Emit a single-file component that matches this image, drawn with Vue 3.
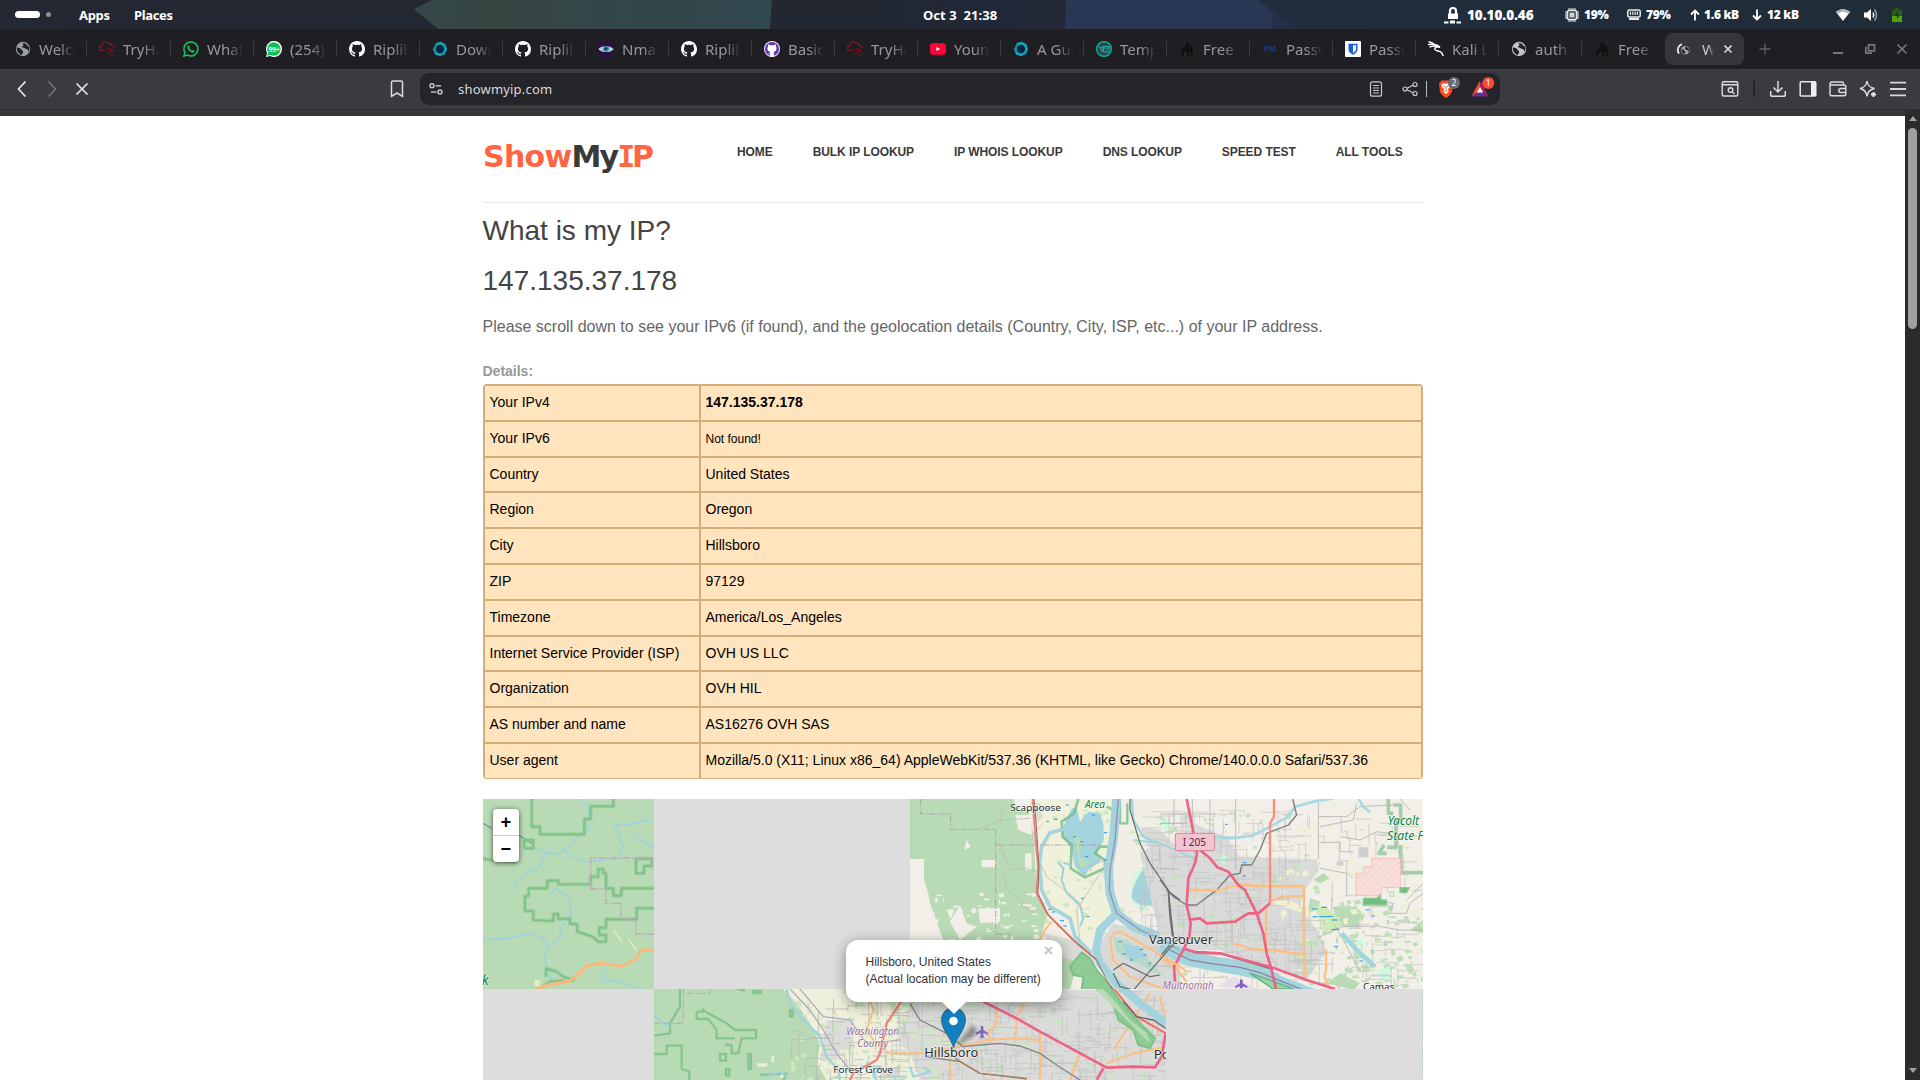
<script setup>
const tabs = [
  { icon: 'globe', title: 'Welco' },
  { icon: 'thm', title: 'TryHa' },
  { icon: 'wa', title: 'What' },
  { icon: 'wa99', title: '(254)' },
  { icon: 'gh', title: 'Riplili' },
  { icon: 'hex', title: 'Down' },
  { icon: 'gh', title: 'Riplili' },
  { icon: 'eye', title: 'Nmap' },
  { icon: 'gh', title: 'Riplili' },
  { icon: 'ghp', title: 'Basic' },
  { icon: 'thm', title: 'TryHa' },
  { icon: 'yt', title: 'Youn' },
  { icon: 'hex', title: 'A Gui' },
  { icon: 'temp', title: 'Temp' },
  { icon: 'fire', title: 'Free T' },
  { icon: 'pm', title: 'Passw' },
  { icon: 'bw', title: 'Passw' },
  { icon: 'kali', title: 'Kali L' },
  { icon: 'globe2', title: 'auth.' },
  { icon: 'fire', title: 'Free T' }
]
const nav = ['HOME', 'BULK IP LOOKUP', 'IP WHOIS LOOKUP', 'DNS LOOKUP', 'SPEED TEST', 'ALL TOOLS']
const rows = [
  ['Your IPv4', '147.135.37.178', 'strong'],
  ['Your IPv6', 'Not found!', 'small'],
  ['Country', 'United States'],
  ['Region', 'Oregon'],
  ['City', 'Hillsboro'],
  ['ZIP', '97129'],
  ['Timezone', 'America/Los_Angeles'],
  ['Internet Service Provider (ISP)', 'OVH US LLC'],
  ['Organization', 'OVH HIL'],
  ['AS number and name', 'AS16276 OVH SAS'],
  ['User agent', 'Mozilla/5.0 (X11; Linux x86_64) AppleWebKit/537.36 (KHTML, like Gecko) Chrome/140.0.0.0 Safari/537.36']
]

let seed = 7
const rnd = () => (seed = (seed * 16807) % 2147483647) / 2147483647
// Axis-aligned minor streets inside a box
function streets(x, y, w, h, n, max) {
  let d = ''
  for (let i = 0; i < n; i++) {
    const px = Math.round(x + rnd() * w)
    const py = Math.round(y + rnd() * h)
    const l = Math.round(12 + rnd() * max)
    d += rnd() > 0.5 ? `M${px},${py}h${l}` : `M${px},${py}v${l}`
    if (rnd() > 0.7) d += `l${Math.round(rnd() * 20)},${Math.round(rnd() * 24 - 8)}`
  }
  return d
}
// Small irregular blobs (parks, woods, fields)
function blobs(x, y, w, h, n, max) {
  let d = ''
  for (let i = 0; i < n; i++) {
    const a = 3 + rnd() * max
    const b = 3 + rnd() * max * 0.8
    d += `M${Math.round(x + rnd() * w)},${Math.round(y + rnd() * h)}l${a.toFixed(1)},${(-b / 3).toFixed(1)}l${(a / 3).toFixed(1)},${b.toFixed(1)}l${(-a).toFixed(1)},${(b / 3).toFixed(1)}z`
  }
  return d
}
const city = streets(-60, 60, 480, 510, 340, 70)
const eastRoads = streets(420, 60, 340, 520, 95, 60)
const cityGreen = blobs(0, 60, 480, 500, 120, 13)
const eastGreen = blobs(400, 330, 390, 260, 150, 17)
const eastCream = blobs(350, 60, 430, 500, 80, 18)
const westPale = blobs(70, 310, 330, 140, 55, 14)
const farm = blobs(420, 60, 300, 380, 60, 14)
const southStreets = streets(-60, 600, 850, 270, 340, 60)
const southGreen = blobs(-200, 600, 980, 270, 170, 14)
const southCream = blobs(-330, 600, 500, 270, 120, 18)
const westRoads = streets(-330, 620, 330, 250, 65, 60)
const wetMarks = 'M440,55h10M462,88h10M438,94h9M575,75h10M612,128h10M540,155h9M520,140h8M555,200h10M610,210h10M498,45h8M445,358h10M455,366h10M480,392h12M490,408h10M543,325h8M560,380h8M735,238h10M655,455h10M668,492h10M720,478h10M690,510h9M730,495h8M745,520h8'
</script>

<template>
  <div class="screen">
    <svg class="defs" width="0" height="0">
      <symbol id="globe" viewBox="0 0 16 16">
        <circle cx="8" cy="8" r="7.2" fill="#9aa0a6" />
        <path d="M2.2 6.3C3.5 7.3 5 7.1 5.9 7.8c1 .8.7 1.9 1.7 2.2.9.4.8 1.6 0 2.3-.6.6-.4 1.3-1 1.9C4 13 1.8 10.500 1.700 7.500ZM7.200 1.900c.3 1 1.300 1.200 1.300 2.100 0 1-1.500 1.100-1.600 2 .6.800 2 .4 2.800 1.200.8.8 2.500.5 3 1.400.4.7.3 1.700 1 2.200a6.300 6.300 0 0 0 .4-5L12.200 4.400 10.600 2.500Z" fill="#202024" />
      </symbol>
      <symbol id="globe2" viewBox="0 0 16 16">
        <circle cx="8" cy="8" r="7.200" fill="#c4c4c6" />
        <path d="M2.2 6.3C3.5 7.3 5 7.1 5.9 7.8c1 .8.7 1.9 1.7 2.2.9.4.8 1.6 0 2.3-.6.6-.4 1.3-1 1.9C4 13 1.8 10.500 1.700 7.500ZM7.200 1.900c.3 1 1.300 1.200 1.300 2.100 0 1-1.500 1.100-1.600 2 .6.800 2 .4 2.800 1.200.8.8 2.500.5 3 1.400.4.7.3 1.700 1 2.200a6.300 6.300 0 0 0 .4-5L12.200 4.400 10.600 2.500Z" fill="#202024" />
      </symbol>
      <symbol id="thm" viewBox="0 0 16 16">
        <path d="M6.500 9.300H2.700A2.300 2.300 0 0 1 2.700 4.700 3.600 3.600 0 0 1 9.200 2.300 3 3 0 0 1 12.800 4.800 2 2 0 0 1 15 7" fill="none" stroke="#a30f22" stroke-width="1.100" />
        <path d="M9 7.500h1.500M12 7.500h1M8.500 9.500h1M11 9.500h3.500M8 12h2.500M12 11.500h1M11 14h1.200M13.500 14h2" stroke="#8d1322" stroke-width="1.200" />
      </symbol>
      <symbol id="wa" viewBox="0 0 16 16">
        <path d="M.900 15.100 1.900 11.500A7 7 0 1 1 4.600 14.100Z" fill="none" stroke="#19c65b" stroke-width="1.500" />
        <path d="M5.700 4.200 6.800 6.200 6.200 7.100C6.700 8.300 7.700 9.200 8.900 9.700L9.700 8.900 11.700 9.900C11.500 11.400 10.300 11.900 9 11.500 6.800 10.900 5 9.100 4.500 7 4.200 5.700 4.700 4.500 5.700 4.200Z" fill="#19c65b" />
      </symbol>
      <symbol id="wa99" viewBox="0 0 16 16">
        <path d="M0 16 1.100 12A8 8 0 1 1 4.200 15Z" fill="#fff" />
        <path d="M1.300 14.700 2.200 11.600A6.700 6.700 0 1 1 4.600 13.900Z" fill="#0abf53" />
        <text x="8.200" y="10.700" font-size="7.500" font-weight="700" fill="#fff" text-anchor="middle" textLength="11.500" lengthAdjust="spacingAndGlyphs" font-family="Noto Sans">99+</text>
      </symbol>
      <symbol id="gh" viewBox="0 0 16 16">
        <path fill="#fff" d="M8 0C3.580 0 0 3.580 0 8c0 3.540 2.290 6.530 5.470 7.590.4.070.550-.170.550-.380 0-.190-.010-.820-.010-1.490-2.010.370-2.530-.490-2.690-.940-.090-.230-.480-.940-.820-1.130-.280-.150-.680-.520-.010-.530.630-.010 1.080.580 1.230.820.720 1.210 1.870.870 2.330.660.070-.520.280-.870.510-1.070-1.780-.200-3.640-.890-3.640-3.950 0-.870.310-1.590.820-2.150-.080-.200-.360-1.020.080-2.120 0 0 .670-.210 2.200.820.640-.180 1.320-.270 2-.270s1.360.090 2 .270c1.530-1.040 2.200-.820 2.200-.820.440 1.100.160 1.920.080 2.120.510.560.820 1.270.820 2.150 0 3.070-1.870 3.750-3.650 3.950.290.250.540.730.540 1.480 0 1.070-.010 1.930-.010 2.200 0 .210.150.460.550.380A8.010 8.010 0 0 0 16 8c0-4.420-3.580-8-8-8Z" />
      </symbol>
      <symbol id="ghp" viewBox="0 0 16 16">
        <circle cx="8" cy="8" r="8" fill="#f1ecfa" /><circle cx="8" cy="8" r="7" fill="#6437b4" />
        <path fill="#fff" d="M4.200 3.200 6.400 4.200h3.200l2.200-1c.5 1 .4 1.600.2 2.300 1.300 2.700 0 4.900-2.300 5.300l.3 4.900H6l.2-2.500-2.300-.8 2-.2.3-1.400C3.800 10.400 2.700 8 4 5.500c-.2-.8-.2-1.500.2-2.300Z" />
      </symbol>
      <symbol id="hex" viewBox="0 0 16 16">
        <path d="M4 1.800 9 .700 13.500 3 15.200 8 13 13.200 8 15.200 3 13.600.900 8.500Z" fill="#0e96ad" />
        <path d="M4.500 3.200 9.500 1.900 13.900 8 8.500 14 3 12.400" fill="none" stroke="#26bfd0" stroke-width=".7" />
        <circle cx="8" cy="8" r="4.200" fill="#062742" />
      </symbol>
      <symbol id="eye" viewBox="0 0 16 16">
        <rect width="16" height="16" rx="1" fill="#2a1140" />
        <path d="M.3 8.200C4 3.800 11.500 3.800 15.700 8.200 12 12 4.500 12 .3 8.200Z" fill="#a8d5e2" />
        <circle cx="8" cy="7.800" r="3" fill="#3e7d99" /><circle cx="8" cy="7.600" r="1.200" fill="#102a3f" />
      </symbol>
      <symbol id="yt" viewBox="0 0 16 16">
        <rect y="2.300" width="16" height="11.500" rx="2.800" fill="#ff0438" /><path d="M6.400 5.900 10.200 8 6.400 10.100Z" fill="#fff" />
      </symbol>
      <symbol id="temp" viewBox="0 0 16 16">
        <circle cx="8" cy="8" r="7.400" fill="#2d4656" stroke="#07bc96" stroke-width="1.200" />
        <path d="M2.500 6.200H7M4 8H7M4.500 10H7M7.500 5.500h5.500v5.500H7.500ZM7.500 6l2.700 2.500L13 6" fill="none" stroke="#07bc96" stroke-width="1" />
      </symbol>
      <symbol id="fire" viewBox="0 0 16 16">
        <path d="M8 .3c1.200 2 3 4 2.800 6 .9-.4 1.200-1.200 1.400-2.300 1.600 3 2 5.500 1.500 9L12.500 16h-9C1.500 12.500 2 9 3.500 6.500c.2 1 .5 1.600 1.200 2C5 5.500 7.700 3.500 8 .3Z" fill="#121112" />
        <path d="M5 16c.3-2 .8-3.800 1.500-5 .5 1.500.7 3 .6 5M10 11c1 1.800 1.300 3.200 1 5" stroke="#38302c" fill="none" />
      </symbol>
      <symbol id="pm" viewBox="0 0 16 16">
        <text x="2" y="11" font-size="8.500" font-weight="700" fill="#173c7c" textLength="12" lengthAdjust="spacingAndGlyphs" font-family="Liberation Sans">PM</text>
      </symbol>
      <symbol id="bw" viewBox="0 0 16 16">
        <rect width="16" height="16" rx="1" fill="#fff" /><path d="M3.500 2.700h9v5.500c0 2.500-2 4.300-4.500 5.500-2.500-1.200-4.500-3-4.500-5.500Z" fill="#175ddc" /><path d="M8 4.300h3v4c0 1.500-1.500 2.800-3 3.700Z" fill="#fff" />
      </symbol>
      <symbol id="kali" viewBox="0 0 16 16">
        <path d="M.5.800C3 1 5 2 6.500 3.500M0 3.500C3 3 6 3 8.500 4.200M1.500 6C4 5 7 4.700 9 5.500M8 4c2 .2 2.800 1.200 4 2.200C9.500 5.600 6.500 6 6.700 8c.3 2 3.600 1.600 5.500 2.700 1.600.9 2.500 2.300 3 4.500" fill="none" stroke="#fff" stroke-width="1.500" />
      </symbol>
    </svg>

    <header class="sysbar">
      <svg class="wall" width="1920" height="29" viewBox="0 0 1920 29">
        <defs>
          <linearGradient id="sky"><stop offset="0" stop-color="#252832" /><stop offset=".45" stop-color="#222731" /><stop offset=".54" stop-color="#20283a" /><stop offset=".62" stop-color="#212d3d" /><stop offset="1" stop-color="#212c39" /></linearGradient>
          <linearGradient id="teal"><stop offset="0" stop-color="#34474a" /><stop offset=".2" stop-color="#374643" /><stop offset="1" stop-color="#30484f" /></linearGradient>
        </defs>
        <rect width="1920" height="29" fill="url(#sky)" />
        <path d="M432 0H772L770 29H438L414 9Z" fill="url(#teal)" />
        <path d="M1019 0h47v29h-50Z" fill="#222835" />
        <path d="M1066 0H1258L1274 13 1271 29H1065Z" fill="#293755" />
        <path d="M1258 0 1298 29H1271L1274 13Z" fill="#243048" />
      </svg>
      <div class="ws"><i class="pill"></i><i class="dot"></i></div>
      <span class="apps">Apps</span><span class="places">Places</span>
      <span class="clock">Oct 3&nbsp; 21:38</span>
      <div class="status">
        <svg width="18" height="18" viewBox="0 0 18 18"><path d="M4 7.500h10V13H4ZM0 15.500h4.500v2H0ZM6 14.500h5v3H6ZM12.500 15.500h4.500v2h-4.500Z" fill="#fff" /><path d="M6 8V5a3 3 0 0 1 6 0v3" fill="none" stroke="#fff" stroke-width="2.200" /></svg>
        <b class="ip">10.10.0.46</b>
        <svg width="14" height="14" viewBox="0 0 14 14"><rect x="2.500" y="2.500" width="9" height="9" rx="1.500" fill="none" stroke="#e8eaec" stroke-width="1.600" /><rect x="4.500" y="4.500" width="5" height="5" fill="#cfd2d5" /><path d="M4 0v2M6 0v2M8 0v2M10 0v2M4 12v2M6 12v2M8 12v2M10 12v2M0 4h2M0 6h2M0 8h2M0 10h2M12 4h2M12 6h2M12 8h2M12 10h2" stroke="#e8eaec" /></svg>
        <b>19%</b>
        <svg width="14" height="14" viewBox="0 0 14 14"><rect x=".8" y="2" width="12.400" height="7" rx="1.500" fill="none" stroke="#e8eaec" stroke-width="1.500" /><path d="M3.500 3.500v3.500M5.800 3.500v3.500M8.100 3.500v3.500M10.400 3.500v3.500" stroke="#d4d7d9" stroke-width="1.300" /><path d="M2 10h10v2H2Z" fill="#e8eaec" /></svg>
        <b>79%</b>
        <svg width="10" height="12" viewBox="0 0 10 12"><path d="M5 11.500V1.500M1 5.500 5 1.500 9 5.500" fill="none" stroke="#fff" stroke-width="1.800" /></svg>
        <b>1.6 kB</b>
        <svg width="10" height="12" viewBox="0 0 10 12"><path d="M5 .5V10.500M1 6.500 5 10.500 9 6.500" fill="none" stroke="#fff" stroke-width="1.800" /></svg>
        <b>12 kB</b>
        <svg class="n1" width="16" height="14" viewBox="0 0 16 14"><path d="M1 4C5 .2 11 .2 15 4L8 13Z" fill="#fff" /><path d="M1 4C5 .2 11 .2 15 4L13.500 5.800C10 3 6 3 2.500 5.800Z" fill="#aeb3b8" /></svg>
        <svg class="n2" width="16" height="14" viewBox="0 0 16 14"><path d="M1 4.500h3L8 1v12L4 9.500H1Z" fill="#fff" /><path d="M10 4.500q1.500 2.500 0 5" fill="none" stroke="#fff" stroke-width="1.500" /><path d="M11.500 1.500q4 5.500 0 11" fill="none" stroke="#9aa0a6" stroke-width="1.500" /></svg>
        <svg class="n2" width="10" height="14" viewBox="0 0 10 14"><path d="M3 0h4v2h3v12H0V2h3Z" fill="#2e5a21" /><path d="M0 8h10v6H0Z" fill="#4ea40a" /><path d="M5.500 3 2.500 8H5v3L8 6.500H5.500Z" fill="#173c12" /></svg>
      </div>
    </header>

    <div class="tabstrip">
      <div v-for="(t, i) in tabs" :key="i" class="tab">
        <svg class="fav" width="16" height="16"><use :href="'#' + t.icon" /></svg>
        <span class="title">{{ t.title }}</span>
      </div>
      <div class="tab-active">
        <svg width="13" height="13" viewBox="0 0 13 13"><path d="M2 10.500A6 6 0 0 1 5 1.200" fill="none" stroke="#e8e8ea" stroke-width="1.800" /><svg x="3.500" y="2.500" width="9.500" height="9.500"><use href="#globe" /></svg></svg>
        <span class="title wt">W</span>
        <svg width="8" height="8" viewBox="0 0 8 8"><path d="M.5.5 7.500 7.500M7.500.5.5 7.500" stroke="#d2d1d6" stroke-width="1.600" /></svg>
      </div>
      <svg class="plus" width="12" height="12" viewBox="0 0 12 12"><path d="M6 .5v11M.5 6h11" stroke="#606064" stroke-width="1.300" /></svg>
      <div class="winctl">
        <svg width="12" height="12" viewBox="0 0 12 12"><path d="M1 10h10" stroke="#77777b" stroke-width="2" /></svg>
        <svg width="12" height="12" viewBox="0 0 12 12"><path d="M4.500 1.800h6v6h-6ZM1.800 4v6.200H8" fill="none" stroke="#77777b" stroke-width="1.700" /></svg>
        <svg width="12" height="12" viewBox="0 0 12 12"><path d="M1.500 1.500 10.500 10.500M10.500 1.500 1.500 10.500" stroke="#77777b" stroke-width="1.700" /></svg>
      </div>
    </div>

    <div class="toolbar">
      <svg width="30" height="20" viewBox="0 0 30 20"><path d="M18.500 2.500 11.500 10 18.500 17.500" fill="none" stroke="#e6e5ea" stroke-width="1.700" /></svg>
      <svg width="30" height="20" viewBox="0 0 30 20"><path d="M11.500 2.500 18.500 10 11.500 17.500" fill="none" stroke="#77767b" stroke-width="1.500" /></svg>
      <svg width="30" height="20" viewBox="0 0 30 20"><path d="M9.500 4.500 20.500 15.500M20.500 4.500 9.500 15.500" stroke="#e6e5ea" stroke-width="1.700" /></svg>
      <svg class="bm" width="30" height="20" viewBox="0 0 30 20"><path d="M9.500 3.500q0-1.500 1.500-1.500h8q1.500 0 1.500 1.500V17.500L15 14 9.500 17.500Z" fill="none" stroke="#dddce1" stroke-width="1.500" /></svg>
      <div class="url">
        <svg width="18" height="16" viewBox="0 0 18 16"><g fill="none" stroke="#c9c8cd" stroke-width="1.400"><circle cx="5" cy="4.800" r="2" /><path d="M8.500 4.800H14" /><circle cx="13" cy="11" r="2" /><path d="M4 11H9.500" /></g></svg>
        <span class="host">showmyip.com</span>
        <svg class="reader" width="34" height="20" viewBox="0 0 34 20"><g fill="none" stroke="#c9c8cd" stroke-width="1.200"><rect x="11.500" y="2.800" width="11" height="14.400" rx="2" /><path d="M14 6.500h6M14 9h6M14 11.500h6M14 14h6" stroke-width="1" /></g></svg>
        <svg width="34" height="20" viewBox="0 0 34 20"><g fill="none" stroke="#c9c8cd" stroke-width="1.200"><circle cx="12" cy="10" r="2" /><circle cx="22" cy="5.500" r="2" /><circle cx="22" cy="14.500" r="2" /><path d="M14 9.200 20 6.300M14 10.800 20 13.700" /></g></svg>
        <i class="sep"></i>
        <svg class="brave" width="34" height="26" viewBox="0 0 34 26"><path d="M6 7.500 8.500 4.500h9l2.500 3-1 8.500Q16.500 20.500 13 22 9.500 20.500 7 16Z" fill="#fb4a22" /><path d="M8.500 8 11 7.500h4l2.500.5-.7 3.500-2 1.500 1 2.500L13 18l-2.800-2.500 1-2.500-2-1.500Z" fill="#fff" /><path d="M10.300 9.800l1.700.6M15.700 9.800l-1.700.6M13 10.500v3M11.500 15h3" stroke="#fb4a22" /><circle cx="21" cy="7" r="6" fill="#686a76" /><text x="21" y="10" font-size="8.500" fill="#fff" text-anchor="middle" font-family="Noto Sans">2</text></svg>
        <svg width="34" height="26" viewBox="0 0 34 26"><path d="M13 4.500 4.300 20.500 13 15Z" fill="#ff4724" /><path d="M13 4.500 21.700 20.500 13 15Z" fill="#9e1f63" /><path d="M4.300 20.500H21.700L13 14Z" fill="#662d91" /><path d="M13 11 9.800 16.500h6.400Z" fill="#fff" /><circle cx="21.300" cy="7" r="6" fill="#fa4a3a" /><text x="21.300" y="10" font-size="8.500" fill="#fff" text-anchor="middle" font-family="Noto Sans">1</text></svg>
      </div>
      <div class="tools">
        <svg width="30" height="20" viewBox="0 0 30 20"><g fill="none" stroke="#dddce1" stroke-width="1.400"><rect x="7.200" y="2.700" width="15.600" height="14.300" rx="1.500" /><path d="M7 5.800h16M17.300 13 19.500 15" /><circle cx="15.500" cy="11" r="2.300" /></g></svg>
        <i class="tsep"></i>
        <svg width="30" height="20" viewBox="0 0 30 20"><path d="M15 2v10.500M10.500 8.500 15 13l4.500-4.500M7.700 12v3.500q0 1.800 1.800 1.800h11q1.800 0 1.800-1.800V12" fill="none" stroke="#dddce1" stroke-width="1.500" /></svg>
        <svg width="30" height="20" viewBox="0 0 30 20"><rect x="7.200" y="2.700" width="15.600" height="14.300" rx="1" fill="none" stroke="#e8e7ec" stroke-width="1.500" /><path d="M18 2.700h5V17h-5Z" fill="#f0eff3" /></svg>
        <svg width="30" height="20" viewBox="0 0 30 20"><g fill="none" stroke="#dddce1" stroke-width="1.400"><path d="M20.500 6V4.500q0-1.500-1.500-1.500H9Q7 3 7 5v10q0 1.800 1.800 1.800H21q1.800 0 1.800-1.800V8q0-2-1.800-2H7.500M23 9.500h-5.200a2 2 0 0 0 0 4H23" /></g></svg>
        <svg width="30" height="20" viewBox="0 0 30 20"><path d="M14 2Q14.800 8.200 21.500 9.500 14.800 10.800 14 17.500 13.200 10.800 7 9.500 13.200 8.200 14 2Z" fill="none" stroke="#dddce1" stroke-width="1.400" /><path d="M20.500 13v5M18 15.500h5" stroke="#f0eff3" stroke-width="1.800" /></svg>
        <svg width="30" height="20" viewBox="0 0 30 20"><path d="M7 3.700h16M7 10h16M7 16.300h16" stroke="#d7d6db" stroke-width="1.800" /></svg>
      </div>
    </div>

    <div class="viewport">
      <div class="doc">
        <div class="strip"></div>
        <div class="container">
          <div class="head">
            <div class="logo"><span class="or">Show</span><span class="my">My</span><span class="or mono">I</span><span class="or">P</span></div>
            <nav><span v-for="n in nav" :key="n">{{ n }}</span></nav>
          </div>
          <h1>What is my IP?</h1>
          <h2>147.135.37.178</h2>
          <p>Please scroll down to see your IPv6 (if found), and the geolocation details (Country, City, ISP, etc...) of your IP address.</p>
          <div class="label">Details:</div>
          <div class="table">
            <template v-for="r in rows" :key="r[0]">
              <div class="cell">{{ r[0] }}</div>
              <div class="cell" :class="r[2]">{{ r[1] }}</div>
            </template>
          </div>

          <div class="map">
            <svg width="940" height="281" viewBox="483 799 940 281">
              <defs>
                <clipPath id="tW"><rect x="483" y="799" width="171" height="190" /></clipPath>
                <clipPath id="tN"><rect x="910" y="799" width="513" height="190" /></clipPath>
                <clipPath id="tS"><rect x="654" y="989" width="512" height="91" /></clipPath>
                <pattern id="hatch" width="14" height="14" patternUnits="userSpaceOnUse" patternTransform="rotate(45)"><rect width="14" height="14" fill="#f5dfd8" /><path d="M0 0v14" stroke="#fbb9b4" stroke-width="2" /></pattern>
              </defs>
              <rect x="483" y="799" width="940" height="281" fill="#ddd" />

              <g clip-path="url(#tW)"><g transform="translate(470 780) scale(.33333)" fill="none" stroke-linejoin="round">
                <rect x="39" y="57" width="514" height="571" fill="#b8dab4" />
                <g stroke="#9ed3df" stroke-width="5">
                  <path d="M335,57 358,85 350,130 358,150 325,165 300,195 265,222 228,218 190,205M228,222 205,265 160,285 138,305 134,333M280,210 310,232 350,246 400,240 445,235 460,200 445,165 435,135 480,133 545,118M495,165 520,185 552,203M235,348 258,326 298,352 302,405 272,445 270,475 235,500 222,530 232,560 245,600M39,478 110,475 175,460 215,470 235,500M410,562 395,575 400,602 450,605 515,627" />
                </g>
                <path d="M39,130 65,145M145,165 188,192" stroke="#6a9ca8" stroke-width="4" />
                <g stroke="#7cc287" stroke-width="12" stroke-opacity=".42">
                  <path id="bnd" d="M185,57V140H210V163H343V117H362V79H430V57M163,180H190V205H163ZM552,325H454V347H430V325H408V280H400V267H385V290H362V313H265V302H232V325H176V348H165V393H190V420L250,423V402H265V418L300,415V432H322V455L368,470 385,485H408V465H388V443H408V418H500V385H552M498,236H545V258H522V280H498ZM228,590 228,565 260,575 280,590 310,600 240,605 215,622M39,235 60,240 140,245" />
                </g>
                <use href="#bnd" stroke="#7dc187" stroke-width="5" />
                <path d="M362,327V234H552M362,327H408V371H453V416H498V462H552" stroke="#bdaab6" stroke-width="4" stroke-dasharray="22 5 6 5" />
                <path d="M430,450l15,20 10,15M475,477l15,20 10,15" stroke="#d8e7bd" stroke-width="6" />
                <circle cx="202" cy="610" r="10" fill="#e2eec1" />
                <path d="M198,627 235,615 300,602 340,570 350,557 390,550 455,558 495,540 515,510H552" stroke="#fbb77c" stroke-width="9" />
                <text x="35" y="616" class="park" font-size="42">k</text>
              </g></g>

              <g clip-path="url(#tN)">
                <g transform="translate(900 790) scale(.33333)" fill="none" stroke-linejoin="round">
                  <rect x="30" y="27" width="1580" height="571" fill="#f2efe9" />
                  <path d="M30,27H340L350,60H385L400,130 410,310 440,380 420,450 540,480 510,600H390V450H130L112,400 90,340 85,310 72,270V207H30Z" fill="#b8dab4" />
                  <path :d="westPale" fill="#f1efe3" />
                  <path d="M345,75h50v60l-40-15ZM235,355h65v40l-60,5ZM150,395l30-50 20,55 30,10-50,40ZM245,210h40v22h-40ZM375,190h20v50h-20ZM200,150l12,20-20,10Z" fill="#f1efe7" />
                  <path d="M412,27H640L625,250 640,370 600,430 545,470 520,400 440,330 420,250Z" fill="#eff1da" />
                  <path d="M690,27H840V330L700,400 650,350 640,250Z" fill="#f1eee6" />
                  <path :d="farm" fill="#cde9c0" />
                  <path d="M390,35 420,40 430,80 400,110ZM430,430 520,450 590,520 560,520 470,500Z" fill="#dcdcd6" />
                  <path d="M720,110 780,120 840,180V340L800,300ZM580,490 640,400 780,440 840,490V597H640Z" fill="#d9d9d7" />
                  <path d="M750,215C715,240 685,265 695,335L740,370 730,330 705,300ZM780,80l20,5 20,30-30,5Z" fill="#ccf8de" />
                  <path d="M515,55 490,110 490,140 515,175 525,230 555,260 565,240 605,210 590,185 612,150 610,100 600,70 565,65 540,95 530,50Z" fill="#a3d3dd" />
                  <path d="M535,27 522,70 485,95 488,140 515,165 512,235 555,262 615,235V210L585,190 600,170H640V60L620,50" stroke="#6fb981" stroke-width="8" stroke-opacity=".75" />
                  <path d="M660,27V100H682V40" stroke="#8bc69a" stroke-width="7" />
                  <path d="M520,130 545,150 540,200 575,220 540,235Z" fill="#b7deb8" />
                  <path d="M475,218 490,235 485,270 500,310 540,345 550,385 540,410M490,218 515,225" stroke="#9fd2de" stroke-width="6" />
                  <path d="M490,118 450,128 425,170 418,220 425,300 450,350 510,385 525,440 575,490" stroke="#a6d3de" stroke-width="11" />
                  <path d="M760,205C735,230 700,270 695,320 702,345 745,352 790,345L803,300C775,265 765,240 760,205Z" fill="#a3d3dd" />
                  <circle cx="748" cy="273" r="11" fill="#c2dcae" />
                  <path d="M650,27 640,150 625,235 630,310 650,370 700,410 780,440 840,480 900,505 1010,530 1090,550 1180,590 1250,612" stroke="#a3d3dd" stroke-width="27" />
                  <path d="M800,460 860,497 950,520 1020,530 1090,548 1160,590" stroke="#a3d3dd" stroke-width="38" />
                  <path d="M645,375 600,420 588,480 600,520 650,580 720,640 800,700" stroke="#a3d3dd" stroke-width="24" />
                  <path d="M695,27 700,90 730,140 790,165 840,190 880,205" stroke="#a3d3dd" stroke-width="7" />
                  <path d="M640,440 680,450 760,520 790,560 730,530 650,490Z" fill="#b5dbc8" />
                  <path d="M665,460 720,470 740,500 690,510Z" fill="#a3d3dd" />
                  <path d="M655,27 645,150 630,240 628,300 650,370 720,420 790,450 850,490 950,525 1060,545 1120,575 1180,597" stroke="#9a8fb0" stroke-width="4" />
                  <path d="M290,165H605M62,27V72H152V118H287V432H330V450" stroke="#b3a3ad" stroke-width="3" stroke-dasharray="20 5 5 5" />
                  <path d="M300,165 330,240 380,235 410,245M310,240 320,300 350,320 370,350 405,370M230,120 300,90 390,85M300,100 310,40M430,100 400,130 410,200 440,260 480,290 520,320 550,360M560,230 620,210M540,460 530,360 600,250 640,210" stroke="#bfbcb8" stroke-width="2.500" />
                  <path :d="wetMarks" stroke="#1d94e8" stroke-width="3" />
                </g>

                <g transform="translate(1160 790) scale(.33333)" fill="none" stroke-linejoin="round">
                  <path d="M-60,190 0,150 60,180 100,100 200,140 240,200 470,208 478,235 430,310 420,350 470,420 500,480 440,570 330,530 180,480 80,480 0,440Z" fill="#dadada" />
                  <path d="M60,75h45v35h-45Z" fill="#ddd" />
                  <path d="M460,270l30-20 20,15-30,15ZM520,350h65l30,25-20,40-70-10ZM750,420l40-30v40ZM500,580l40-30 60,30-20,20ZM450,325l30,10-10,30-25-10Z" fill="#b8dab4" />
                  <path :d="eastCream" fill="#eef0d0" /><path :d="eastGreen" fill="#bfdfba" />
                  <path :d="cityGreen" fill="#c4e3bb" />
                  <path d="M0,80 30,90 20,120 0,110ZM180,190 205,200 200,225 180,215ZM540,430 640,510 625,530 560,460ZM650,540 690,530 690,570 660,570ZM590,450h20v15h-20Z" fill="#ccfadd" />
                  <path d="M330,335 380,330 440,350 480,400 430,370 370,350Z" fill="#f2efd3" />
                  <path d="M465,345 500,350 545,400 510,435 480,400Z" fill="#cdebb9" />
                  <path d="M595,172h30v30h-30ZM530,215h20v12h-20Z" fill="#d0cfcf" />
                  <path :d="city" stroke="#c1c1c1" stroke-width="1.800" /><path :d="eastRoads" stroke="#c0bfbd" stroke-width="2" />
                  <path d="M0,72H165M42,27V110M97,27V130M150,27V135M227,27V240M0,100H80M475,27V208H475M475,80 560,80 600,50 700,45M475,157H540V185H580M480,110 580,90 590,40M540,140 600,150 650,125 690,130M790,310 750,340 740,370H690L700,340 650,330M480,440 550,410 650,408 720,420 790,420M520,400 545,440 600,545M720,27 750,60M480,235 560,250V320M790,280 740,330" stroke="#b9b8b6" stroke-width="2.800" />
                  <path d="M455,357h18M458,380h14M485,352h16M478,380h22M500,379h20M515,390h18M515,418h22M250,218h10M248,258h10M195,103h8M618,360h10M635,378h10M522,470h12M598,513h10" stroke="#1d94e8" stroke-width="3" />
                  <path d="M160,140 215,145 275,138 330,110 385,80 405,50 460,35 520,25M596,27 610,50 630,67" stroke="#a5d9e4" stroke-width="8" />
                  <path d="M-80,150 0,160 60,185 110,210" stroke="#a3d3dd" stroke-width="6" />
                  <path d="M545,430 600,490 645,530" stroke="#a3d3dd" stroke-width="14" />
                  <path d="M0,470 80,510 150,525 240,540 310,555 400,590 430,600" stroke="#a3d3dd" stroke-width="32" />
                  <path d="M270,550 330,570 400,597H340Z" fill="#a0d3a4" stroke="#68b986" stroke-width="5" />
                  <path d="M170,590 220,560 290,597Z" fill="#e5dfec" />
                  <path d="M30,480 90,510 150,520 240,532 300,548 360,572 430,600" stroke="#8d83a7" stroke-width="4" />
                  <path d="M685,27V70H700M700,45H722V95H708V172H682M722,165V248H790M672,165 657,190H680" stroke="#97c79e" stroke-width="11" stroke-opacity=".85" />
                  <path d="M588,315V250H610V230H635V205H721V293H665V310L650,318Z" fill="url(#hatch)" stroke="#fbbcb8" stroke-width="3" />
                  <path d="M610,325h40l12-10v15h18v15h-70ZM720,293h28l-8,15h-20Z" fill="#72bd82" stroke="#8dca98" stroke-width="4" />
                  <path d="M689,306h12v12h-12Z" stroke="#bcdfba" stroke-width="4" />
                  <path d="M398,27 410,75 385,105 320,130 300,180 275,225H245L240,250 210,255 170,300 110,345 80,345 40,320 0,270" stroke="#7c7c7c" stroke-width="4" />
                  <path d="M25,300 30,380 38,440M0,500 30,465M85,483 180,490 330,535" stroke="#777" stroke-width="5" />
                  <g stroke="#fcbf80" stroke-width="7"><path d="M88,300H180L220,288 250,285 300,288H432V465L437,565M330,333 375,320 432,318M318,345V480M220,460 280,478 340,480 432,495M498,480V540L493,560 510,597M0,505 45,530 80,575" /></g>
                  <path d="M342,27V80L330,100V340" stroke="#ff8e78" stroke-width="7" />
                  <g stroke="#ee6384" stroke-width="8"><path d="M80,27 97,110 111,190 105,220 85,265 80,345 92,400 88,440 70,480 42,530 45,575M120,180 150,205 172,232 205,245 235,285 255,300 290,370 310,430 320,490 335,540 348,597M92,388 120,385 140,400 225,395 265,370 295,370 330,340M70,475 110,488 180,490 330,530 440,570 525,597" /></g>
                  <rect x="46" y="130" width="118" height="52" rx="5" fill="#efc5cf" stroke="#d9839b" stroke-width="3" />
                  <text x="68" y="167" class="shield" font-size="30" textLength="70" lengthAdjust="spacingAndGlyphs">I 205</text>
                  <text x="683" y="106" class="park" font-size="38" textLength="94" lengthAdjust="spacingAndGlyphs">Yacolt</text>
                  <text x="681" y="149" class="park" font-size="38" textLength="109" lengthAdjust="spacingAndGlyphs">State F</text>
                  <text x="8" y="597" class="county" font-size="30" textLength="153" lengthAdjust="spacingAndGlyphs">Multnomah</text>
                  <text x="609" y="599" class="town" font-size="29" textLength="94" lengthAdjust="spacingAndGlyphs">Camas</text>
                  <path d="M240,570q4-5 8,0v10l14,9v5l-14-5v6h-8v-6l-15,5v-5l15-9Z" fill="#8461c4" />
                </g>

                <g transform="translate(900 790) scale(.33333)" fill="none" stroke-linejoin="round">
                  <path d="M510,530 545,487 570,505 590,540 640,600H545L550,560 520,555Z" fill="#8fcc95" stroke="#7cc287" stroke-width="6" />
                  <path d="M455,395 435,420 420,455M640,430 660,425 740,470 840,530 860,545M640,430 630,450 640,510 690,560 800,600" stroke="#fcbf80" stroke-width="6" />
                  <path d="M640,540 670,520 750,560 780,555M840,440 670,635M690,27V60L720,160 750,220 805,300 820,440M800,300 840,330M640,550 660,590 740,610" stroke="#686868" stroke-width="3.500" />
                  <path d="M398,27 405,120 414,230 410,310 440,370 520,450 590,510" stroke="#ef8272" stroke-width="6" />
                  <path d="M402,27 410,120 417,230 414,310 445,375 530,460 590,510 620,570 640,600" stroke="#896d60" stroke-width="3" />
                  <text x="331" y="64" class="town" font-size="29" textLength="152" lengthAdjust="spacingAndGlyphs">Scappoose</text>
                  <text x="555" y="53" class="park" font-size="30" textLength="60" lengthAdjust="spacingAndGlyphs">Area</text>
                  <text x="747" y="462" class="town" font-size="38" textLength="192" lengthAdjust="spacingAndGlyphs">Vancouver</text>
                </g>
              </g>

              <g clip-path="url(#tS)"><g transform="translate(900 790) scale(.33333)" fill="none" stroke-linejoin="round">
                <rect x="-750" y="597" width="1560" height="273" fill="#eff0dc" />
                <path d="M30,640 120,600H800V870H60L30,790 -10,750Z" fill="#dbdbda" />
                <path d="M-220,690h80v90h-40v30h-60ZM-60,830h60v30h-60Z" fill="#dcdcdc" />
                <path d="M-738,597H-350L-310,640 -270,700 -240,760 -250,820 -220,870H-738ZM-160,597H120L60,620 -50,610Z" fill="#b8dab4" />
                <path :d="southCream" fill="#cfe6be" /><path :d="southGreen" fill="#c6e6c0" />
                <path :d="southStreets" stroke="#c0c0c0" stroke-width="2" /><path :d="westRoads" stroke="#bcbab4" stroke-width="2.500" />
                <path d="M-428,820h30v10h-30ZM-386,797h8v20h-8ZM-360,847h14v16h-14Z" fill="#f0ecdf" />
                <g stroke="#7cc287" stroke-width="7" stroke-opacity=".85"><path d="M-660,597V650L-690,700V730L-738,737M-738,792H-700V767H-655V837L-632,845V870M-610,665H-592V658L-575,670 -520,700 -495,720H-432V745H-475L-485,790H-505V765H-525M-610,665V687H-575L-550,720V745H-495M-540,792h18v20h-18ZM-455,792h8v45h-8ZM-522,837h10v20h-10ZM-330,660h8v20h-8ZM-440,603h22v6h-22ZM-488,597 -465,602M-420,855 -340,850 -350,870" /></g>
                <path d="M-738,677 -690,713M-340,597 -330,640 -290,690 -240,740 -220,800 -185,840 -180,870M-410,865 -360,845 -340,860" stroke="#9fd2de" stroke-width="7" />
                <path d="M-330,597 -270,660 -230,720 -190,790 -150,840M-300,597 -230,680 -150,690 -100,760 0,750" stroke="#b0aeb4" stroke-width="4" />
                <path d="M-650,597V700H-738M-570,597V610H-640" stroke="#bda5b8" stroke-width="3" stroke-dasharray="20 5 5 5" />
                <path d="M-100,815 -70,870M-120,830h60l-20,30M30,830 40,860 90,845 70,830M-40,860H20" stroke="#a3d3dd" stroke-width="7" />
                <path d="M-100,600 -80,660 -100,720 -70,765M-40,790H75M75,790 180,770 260,750 340,745 420,750M120,620 150,665 130,740M290,650V700L262,730 275,755M420,725V870M350,680 348,740M374,640 350,680M540,790 510,870M150,800V870M620,820 700,790 800,770M640,780 750,610M780,620 798,690" stroke="#fcbf80" stroke-width="6" />
                <path d="M30,640 60,690 140,730 190,770 240,765 300,760 360,768 420,790 470,825 540,870M75,800 180,815 240,850 380,865" stroke="#858585" stroke-width="4" />
                <path d="M165,805 240,850 380,867" stroke="#ac8058" stroke-width="4" />
                <path d="M40,597 0,640 -40,700 -60,790 -70,810 -140,850 -150,870" stroke="#ef8374" stroke-width="7" />
                <path d="M645,375 600,420 588,480 600,520 650,580 720,640 800,700" stroke="#a3d3dd" stroke-width="24" />
                <path d="M545,592H605L640,640 655,690 700,720 715,765 750,775 765,745 710,690 650,620 630,590Z" fill="#8fcc95" stroke="#7cc287" stroke-width="6" />
                <path d="M580,592 605,592 650,640 690,690 740,730 750,760 710,720 650,660Z" fill="#b8dab4" />
                <path d="M620,570 710,680 797,730" stroke="#ef7060" stroke-width="6" />
                <path d="M670,635 710,680 760,690 797,715" stroke="#686868" stroke-width="4" />
                <path d="M250,635 350,685 420,725 620,833 700,830 765,832 785,800 797,730M610,835 590,870" stroke="#ee6384" stroke-width="8" />
                <path d="M242,710q4-5 8,0v10l14,9v5l-14-5v9l4,5h-16l4-5v-9l-14,5v-5l14-9Z" fill="#8461c4" />
                <text x="-161" y="736" class="county" font-size="30" textLength="158" lengthAdjust="spacingAndGlyphs">Washington</text>
                <text x="-128" y="772" class="county" font-size="30" textLength="92" lengthAdjust="spacingAndGlyphs">County</text>
                <text x="-200" y="848" class="town" font-size="28" textLength="179" lengthAdjust="spacingAndGlyphs">Forest Grove</text>
                <text x="73" y="800" class="town" font-size="38" textLength="162" lengthAdjust="spacingAndGlyphs">Hillsboro</text>
                <text x="761" y="808" class="town" font-size="40">Po</text>
              </g></g>
              <path d="M1422.500 989V1080" stroke="#bcd9c8" stroke-dasharray="8 3 13 5" />

              <defs><filter id="sh" x="-50%" y="-50%" width="200%" height="200%"><feGaussianBlur stdDeviation="2" /></filter></defs>
              <path d="M954 1047 972 1025 978 1030 973 1037Z" opacity=".35" filter="url(#sh)" />
              <path d="M953.500 1047.500C951 1038 941.500 1030 941.500 1019.500A12 12 0 0 1 965.500 1019.500C965.500 1030 956 1038 953.500 1047.500Z" fill="#127fc0" stroke="#2e6c97" />
              <circle cx="953.500" cy="1021" r="4.300" fill="#fff" />
            </svg>
            <div class="zoom"><span>+</span><span>−</span></div>
            <div class="popup">Hillsboro, United States<br>(Actual location may be different)<i class="x">×</i><i class="tip"></i></div>
          </div>
        </div>
      </div>
      <div class="scroll"><i class="up"></i><i class="thumb"></i><i class="down"></i></div>
    </div>
  </div>
</template>

<style>
body { overflow: hidden; background: #fff; }
</style>
<style scoped>
.screen { width: 1920px; height: 1080px; overflow: hidden; display: flex; flex-direction: column; font-family: "Noto Sans", sans-serif; background: #fff; }
.defs { position: absolute; }
svg { display: block; flex: none; }
.sysbar { height: 29px; display: flex; align-items: center; position: relative; color: #fff; font-weight: 700; font-size: 13px; flex: none; background: #22272f; }
.wall { position: absolute; left: 0; top: 0; }
.ws, .apps, .places, .clock, .status { position: relative; }
.ws { display: flex; align-items: center; width: 64px; padding-left: 15px; }
.pill { width: 25px; height: 7px; border-radius: 4px; background: #fff; }
.dot { width: 5px; height: 5px; border-radius: 50%; background: #8c8f96; margin-left: 6px; }
.apps, .places, .clock { line-height: 29px; padding-top: 1px; white-space: nowrap; letter-spacing: -.35px; }
.apps { width: 55px; }
.places { width: 789px; }
.clock { width: 521px; letter-spacing: .05px; }
.status { display: grid; grid-template-columns: 23px 98px 19px 43px 19px 44px 14px 48px 15px 67px 27px 29px 30px; align-items: center; font-size: 12px; white-space: nowrap; letter-spacing: -.3px; }
.status .ip { font-size: 13.500px; letter-spacing: -.05px; }
.n1 { margin-left: 1px; }
.n2 { margin-left: 2px; }

.tabstrip { height: 40px; background: #1f1e23; display: flex; align-items: center; padding-left: 15px; flex: none; }
.tab { width: 83px; height: 16px; display: flex; align-items: center; flex: none; }
.tab:nth-child(-n+2) { width: 84px; }
.tab:not(:nth-child(20))::after { content: ""; width: 1px; height: 16px; background: #3d3c41; margin-left: auto; margin-right: 12px; }
.title { font-size: 15px; line-height: 20px; color: #98979b; margin-left: 8px; width: 37px; overflow: hidden; white-space: nowrap; -webkit-mask-image: linear-gradient(90deg, #000 55%, transparent 98%); mask-image: linear-gradient(90deg, #000 55%, transparent 98%); }
.tab-active { width: 79px; height: 32px; margin-left: -12px; border-radius: 8px; background: #36353a; display: flex; align-items: center; padding-left: 12px; box-sizing: border-box; flex: none; }
.title.wt { width: 12px; margin-left: 12px; margin-right: 10px; color: #c8c7cb; }
.plus { margin-left: 15px; }
.winctl { display: flex; gap: 20px; margin-left: auto; padding-right: 12px; }

.toolbar { height: 41px; background: #3b3a3f; border-bottom: 1px solid #2e2d31; display: flex; align-items: center; padding-left: 7px; flex: none; box-sizing: border-box; }
.bm { margin-left: 285px; }
.url { margin-left: 8px; width: 1080px; height: 32px; border-radius: 9px; background: #252429; display: flex; align-items: center; box-sizing: border-box; padding-left: 7px; }
.host { font-size: 13px; color: #dad9de; margin-left: 13px; letter-spacing: .2px; }
.reader { margin-left: auto; }
.sep { width: 1px; height: 16px; background: #b9b8bd; margin-left: -1px; }
.brave { margin-left: 6px; }
.url > svg:last-child { margin-right: -1px; }
.tools { display: flex; align-items: center; margin-left: auto; padding-right: 7px; }
.tsep { width: 2px; height: 16px; background: #232227; margin: 0 8px; }

.viewport { flex: 1; display: flex; min-height: 0; }
.doc { width: 1905px; overflow: hidden; }
.strip { height: 6px; background: #383838; }
.container { width: 940px; margin-left: 483px; font-family: "Liberation Sans", Arial, sans-serif; }
.head { height: 86px; border-bottom: 1px solid #e9e9e9; display: flex; }
.logo { width: 254px; font: 700 30px/36px "DejaVu Sans", sans-serif; letter-spacing: -.7px; color: #3a3a3a; padding-top: 23px; box-sizing: border-box; white-space: nowrap; }
.or { color: #ff6542; }
.my { letter-spacing: -1.800px; }
.mono { font-family: "DejaVu Sans Mono", monospace; letter-spacing: -3.500px; }
nav { display: flex; gap: 40px; padding-top: 28px; font: 700 12px/16px "Liberation Sans", Arial, sans-serif; letter-spacing: -.08px; color: #3a3a3a; white-space: nowrap; }
h1, h2 { margin: 0 0 0 -.5px; font-weight: 400; font-size: 28px; line-height: 34px; color: #444; }
h1 { padding-top: 11px; }
h2 { padding-top: 16px; }
p { margin: 19px 0 0 -.5px; font-size: 16px; line-height: 20px; color: #666; white-space: nowrap; }
.label { margin: 25px 0 0 -.5px; font: 700 14px/18px "Liberation Sans", Arial, sans-serif; color: #999; padding-bottom: 4px; }
.table { display: grid; grid-template-columns: 214px 720px; grid-template-rows: 34px 34px 33px 34px 34px 34px 34px 33px 34px 34px 34px; gap: 2px; padding: 2px 2px 1px; background: #d3ae7a; border-radius: 4px; font-size: 14px; color: #000; overflow: hidden; }
.cell { background: #ffe4bd; padding-left: 4.500px; line-height: 32px; white-space: nowrap; }
.strong { font-weight: 700; }
.small { font-size: 12px; line-height: 34px; }
.map { margin-top: 20px; width: 940px; height: 281px; position: relative; overflow: hidden; }
.map text { font-family: "Noto Sans", sans-serif; paint-order: stroke; stroke: #fff; stroke-opacity: .65; stroke-width: 4px; stroke-linejoin: round; }
.map text.shield { fill: #6e1a42; stroke: none; }
.town { fill: #2b2b2b; }
.park { fill: #0b8443; font-style: italic; }
.county { fill: #9a6f9c; font-style: italic; }
.zoom { position: absolute; left: 10px; top: 10px; width: 26px; border-radius: 4px; background: #fff; box-shadow: 0 1px 5px rgba(0, 0, 0, .65); font: 700 18px/28px "Liberation Mono", monospace; text-align: center; color: #000; }
.zoom span { display: block; height: 26px; }
.zoom span:first-child { border-bottom: 1px solid #ccc; }
.popup { position: absolute; left: 363px; top: 141px; width: 216px; height: 62px; box-sizing: border-box; padding: 14px 0 0 19.500px; border-radius: 12px; background: #fff; box-shadow: 0 3px 14px rgba(0, 0, 0, .4); font-size: 12px; line-height: 17px; color: #333; white-space: nowrap; }
.x { position: absolute; right: 9px; top: 2px; font: 700 16px/18px "Liberation Sans", sans-serif; color: #c3c3c3; }
.tip { position: absolute; left: 95px; top: 61px; border: 13px solid transparent; border-top-color: #fff; border-bottom: 0; }
.scroll { width: 15px; background: #2b2b2b; display: flex; flex-direction: column; align-items: center; }
.up { border: 4.500px solid transparent; border-bottom: 5px solid #a0a0a0; border-top: 0; margin-top: 6px; }
.thumb { width: 9px; height: 201px; border-radius: 5px; background: #a0a0a0; margin-top: 7px; }
.down { border: 4.500px solid transparent; border-top: 5px solid #a0a0a0; border-bottom: 0; margin-top: auto; margin-bottom: 7px; }
</style>
